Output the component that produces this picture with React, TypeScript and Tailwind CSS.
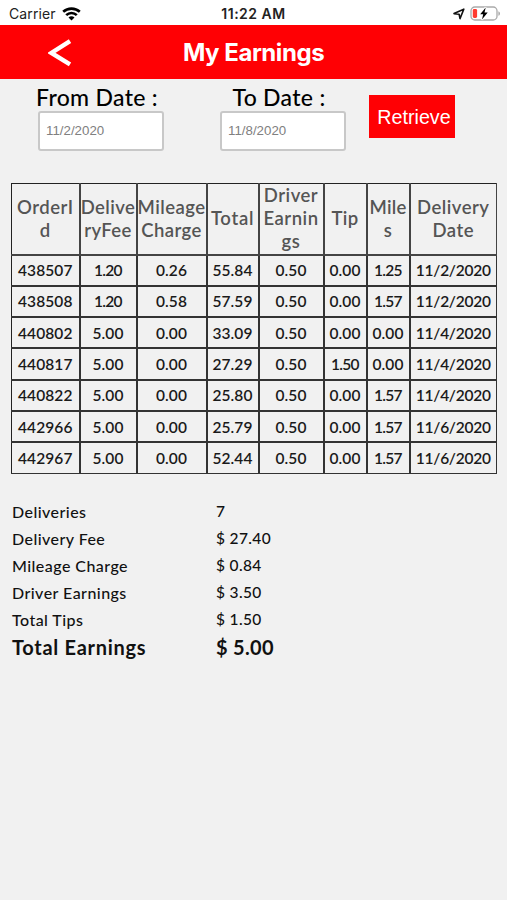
import React from "react";

type Column = {
  lines: string[];
  className: string;
};

const columns: Column[] = [
  { lines: ["OrderI", "d"], className: "tracking-[0.5px]" },
  { lines: ["Delive", "ryFee"], className: "tracking-[0.4px]" },
  { lines: ["Mileage", "Charge"], className: "tracking-[0.45px]" },
  { lines: ["Total"], className: "tracking-[0.7px]" },
  { lines: ["Driver", "Earnin", "gs"], className: "tracking-[0.5px]" },
  { lines: ["Tip"], className: "tracking-[0.3px]" },
  { lines: ["Mile", "s"], className: "tracking-[0.2px]" },
  { lines: ["Delivery", "Date"], className: "tracking-[0.5px]" },
];

const orders = [
  ["438507", "1.20", "0.26", "55.84", "0.50", "0.00", "1.25", "11/2/2020"],
  ["438508", "1.20", "0.58", "57.59", "0.50", "0.00", "1.57", "11/2/2020"],
  ["440802", "5.00", "0.00", "33.09", "0.50", "0.00", "0.00", "11/4/2020"],
  ["440817", "5.00", "0.00", "27.29", "0.50", "1.50", "0.00", "11/4/2020"],
  ["440822", "5.00", "0.00", "25.80", "0.50", "0.00", "1.57", "11/4/2020"],
  ["442966", "5.00", "0.00", "25.79", "0.50", "0.00", "1.57", "11/6/2020"],
  ["442967", "5.00", "0.00", "52.44", "0.50", "0.00", "1.57", "11/6/2020"],
];

const summary = [
  { label: "Deliveries", value: "7" },
  { label: "Delivery Fee", value: "$ 27.40" },
  { label: "Mileage Charge", value: "$ 0.84" },
  { label: "Driver Earnings", value: "$ 3.50" },
  { label: "Total Tips", value: "$ 1.50" },
];

const cellTracking = (cell: string) => {
  if (cell.includes("/")) return "tracking-[-0.25px]";
  if (cell.startsWith("1")) return "tracking-[-0.7px]";
  return "tracking-[0.1px]";
};

const StatusBar = () => (
  <div className="grid h-[25px] grid-cols-3 items-center bg-white pt-[2px] font-[Inter,sans-serif] text-[14px] text-[#222]">
    <div className="flex items-center gap-[6px] pl-[9px]">
      <span className="tracking-[0.1px]">Carrier</span>
      <svg width="19" height="14" viewBox="0 0 19 14" fill="none" stroke="#000" strokeWidth="2.6">
        <path d="M1.2 4.8C5.8.5 13.2.5 17.8 4.8" />
        <path d="M4.2 8.1C7.2 5.2 11.8 5.2 14.8 8.1" />
        <path d="M6.5 10.5C8.2 8.9 10.8 8.9 12.5 10.5L9.5 13.4Z" fill="#000" stroke="none" />
      </svg>
    </div>
    <span className="text-center text-[14px] font-semibold tracking-[0.5px]">11:22 AM</span>
    <div className="flex items-center justify-end gap-[5px] pr-[6px]">
      <svg width="12" height="12" viewBox="0 0 12 12" fill="none" stroke="#111" strokeWidth="1.6" strokeLinejoin="round">
        <path d="M1 5.6L10.8 1.2L7 10.6L6.1 6.2Z" />
      </svg>
      <svg width="31" height="15" viewBox="0 0 31 15">
        <rect x="1" y="1" width="26" height="13" rx="3.8" fill="#fff" stroke="#aaa" strokeWidth="1.3" />
        <path d="M28.4 5.2C30.5 6 30.5 9 28.4 9.8Z" fill="#aaa" />
        <rect x="2.8" y="3" width="4.3" height="9" rx="1.4" fill="#ff3b30" />
        <path d="M15.7 1.4L10.2 8.3H13.2L12 13.6L17.7 6.5H14.5Z" fill="#000" stroke="#fff" strokeWidth="1.8" paintOrder="stroke" />
      </svg>
    </div>
  </div>
);

const Header = () => (
  <header className="grid h-[54px] grid-cols-[120px_1fr_120px] items-center bg-[#ff0004] text-white">
    <button className="pt-px pl-[48px]" aria-label="Back">
      <svg width="24" height="28" viewBox="0 0 24 28" fill="none" stroke="#fff" strokeWidth="4.4">
        <path d="M22 2.2L3.4 14L22 25.4" />
      </svg>
    </button>
    <h1 className="pt-[2px] text-center font-[Inter,sans-serif] text-[24px] leading-none font-bold tracking-[-0.45px]">
      My Earnings
    </h1>
  </header>
);

const DateField = ({ label, value }: { label: string; value: string }) => (
  <label className="flex w-[126px] flex-col items-center">
    <span className="h-[26px] pr-[8px] text-[23px] leading-[25px] font-medium tracking-[0.3px] whitespace-nowrap text-black">
      {label}
    </span>
    <input
      className="h-[40px] w-[126px] rounded-[3px] border-2 border-[#c8c8c8] bg-white px-[6px] pb-[2px] font-['Liberation_Sans',sans-serif] text-[13.3px] text-[#808080]"
      defaultValue={value}
    />
  </label>
);

const OrdersTable = () => (
  <table className="mt-[32px] ml-[11px] w-[485px] table-fixed border-collapse border border-[#222] text-center">
    <colgroup>
      <col className="w-[68px]" />
      <col className="w-[57px]" />
      <col className="w-[70px]" />
      <col className="w-[52px]" />
      <col className="w-[65px]" />
      <col className="w-[43px]" />
      <col className="w-[43px]" />
      <col className="w-[87px]" />
    </colgroup>
    <thead>
      <tr className="h-[71px]">
        {columns.map((column) => (
          <th
            key={column.lines[0]}
            className={`border-r-2 border-b-2 border-[#444] p-0 text-[18.5px] leading-[23px] font-semibold whitespace-nowrap text-[#555] last:border-r ${column.className}`}
          >
            {column.lines.map((line) => (
              <div key={line}>{line}</div>
            ))}
          </th>
        ))}
      </tr>
    </thead>
    <tbody>
      {orders.map((order) => (
        <tr key={order[0]} className="group h-[31.3px]">
          {order.map((cell, i) => (
            <td
              key={i}
              className={`border-r-2 border-b-2 border-[#333] p-0 text-[15.5px] leading-[20px] font-semibold whitespace-nowrap text-[#1a1a1a] group-last:border-b last:border-r ${cellTracking(cell)}`}
            >
              {cell}
            </td>
          ))}
        </tr>
      ))}
    </tbody>
  </table>
);

const Summary = () => (
  <dl className="mt-[24px] ml-[12px] grid grid-cols-[204px_1fr] text-[15.5px] leading-[27px] font-medium text-[#111]">
    {summary.map(({ label, value }) => (
      <React.Fragment key={label}>
        <dt className="text-[16px] tracking-[0.45px]">{label}</dt>
        <dd className="tracking-[0.35px]">{value}</dd>
      </React.Fragment>
    ))}
    <dt className="text-[20px] leading-[28px] font-bold tracking-[0.7px]">Total Earnings</dt>
    <dd className="text-[20px] leading-[28px] font-bold tracking-[0.3px]">$ 5.00</dd>
  </dl>
);

export default function App() {
  return (
    <div className="h-[900px] w-[507px] overflow-hidden bg-[#f1f1f1] font-[Lato,sans-serif]">
      <StatusBar />
      <Header />
      <div className="flex pt-[6px] pl-[38px]">
        <DateField label="From Date :" value="11/2/2020" />
        <div className="ml-[56px]">
          <DateField label="To Date :" value="11/8/2020" />
        </div>
        <button className="mt-[10px] ml-[23px] h-[43px] w-[86px] bg-[#ff0004] pt-[2px] pl-[4px] font-['Liberation_Sans',sans-serif] text-[19.7px] text-white">
          Retrieve
        </button>
      </div>
      <OrdersTable />
      <Summary />
    </div>
  );
}
